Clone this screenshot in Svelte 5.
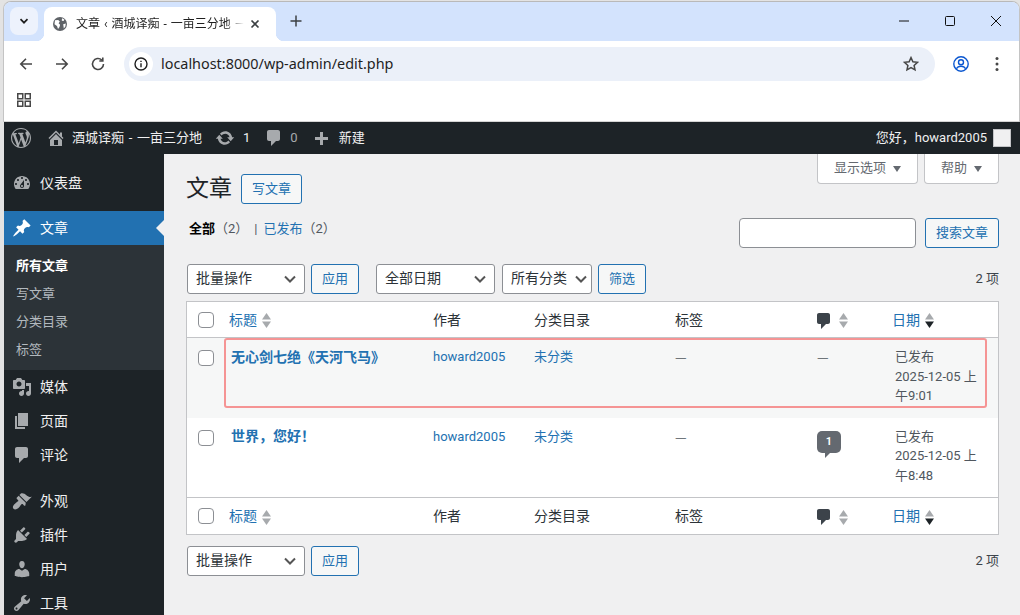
<script>
  const icons = {
    wp: 'M20 10c0-5.51-4.49-10-10-10C4.48 0 0 4.49 0 10c0 5.52 4.48 10 10 10 5.51 0 10-4.48 10-10zM7.78 15.37L4.37 6.22c.55-.02 1.17-.08 1.17-.08.5-.06.44-1.13-.06-1.11 0 0-1.45.11-2.37.11-.18 0-.37 0-.58-.01C4.12 2.69 6.87 1.11 10 1.11c2.33 0 4.45.87 6.05 2.34-.68-.11-1.65.39-1.65 1.58 0 .74.45 1.36.9 2.1.35.61.55 1.36.55 2.46 0 1.49-1.4 5-1.4 5l-3.03-8.37c.54-.02.82-.17.82-.17.5-.05.44-1.25-.06-1.22 0 0-1.44.12-2.38.12-.87 0-2.33-.12-2.33-.12-.5-.03-.56 1.2-.06 1.22l.92.08 1.26 3.41zM17.41 10c.24-.64.74-1.87.43-4.25.7 1.29 1.05 2.71 1.05 4.25 0 3.29-1.73 6.24-4.4 7.78.97-2.59 1.94-5.2 2.92-7.78zM6.1 18.09C3.12 16.65 1.11 13.53 1.11 10c0-1.3.23-2.48.72-3.59C3.25 10.3 4.67 14.2 6.1 18.09zm4.03-6.63l2.58 6.98c-.86.29-1.76.45-2.71.45-.79 0-1.57-.11-2.29-.33.81-2.38 1.62-4.74 2.42-7.1z',
    home: 'M16 8.5l1.53 1.53-1.06 1.06L10 4.62l-6.47 6.47-1.06-1.06L10 2.5l4 4v-2h2v4zm-6-2.46l6 5.99V18H4v-5.97zM12 17v-5H8v5h4z',
    update: 'M10.2 3.28c3.53 0 6.43 2.61 6.92 6h2.08l-3.5 4-3.5-4h2.32c-.45-1.97-2.21-3.45-4.32-3.45-1.45 0-2.73.71-3.54 1.78L4.95 5.66C6.23 4.2 8.11 3.28 10.2 3.28zm-.4 13.44c-3.52 0-6.43-2.61-6.92-6H.8l3.5-4c1.17 1.33 2.33 2.67 3.5 4H5.48c.45 1.97 2.21 3.45 4.32 3.45 1.45 0 2.73-.71 3.54-1.78l1.71 1.95c-1.28 1.46-3.15 2.38-5.25 2.38z',
    plus: 'M17 7v3h-5v5H9v-5H4V7h5V2h3v5h5z',
    dashboard: 'M3.76 16h12.48c1.1-1.37 1.76-3.11 1.76-5 0-4.42-3.58-8-8-8s-8 3.58-8 8c0 1.89.66 3.63 1.76 5zM10 4c.55 0 1 .45 1 1s-.45 1-1 1-1-.45-1-1 .45-1 1-1zM6 6c.55 0 1 .45 1 1s-.45 1-1 1-1-.45-1-1 .45-1 1-1zm8 0c.55 0 1 .45 1 1s-.45 1-1 1-1-.45-1-1 .45-1 1-1zm-5.37 5.55L12 7v6c0 1.1-.9 2-2 2s-2-.9-2-2c0-.57.24-1.08.63-1.45zM4 10c.55 0 1 .45 1 1s-.45 1-1 1-1-.45-1-1 .45-1 1-1zm12 0c.55 0 1 .45 1 1s-.45 1-1 1-1-.45-1-1 .45-1 1-1zm-5 3c0-.55-.45-1-1-1s-1 .45-1 1 .45 1 1 1 1-.45 1-1z',
    post: 'M10.44 3.02l1.82-1.82 6.36 6.35-1.83 1.82c-1.05-.68-2.48-.57-3.41.36l-.75.75c-.92.93-1.04 2.35-.35 3.41l-1.83 1.82-2.41-2.41-2.8 2.79c-.42.42-3.38 2.71-3.8 2.29s1.86-3.39 2.28-3.81l2.79-2.79L4.1 9.36l1.83-1.82c1.05.69 2.48.57 3.4-.36l.75-.75c.93-.92 1.05-2.35.36-3.41z',
    media: 'M13 11V4c0-.55-.45-1-1-1h-1.67L9 1H5L3.67 3H2c-.55 0-1 .45-1 1v7c0 .55.45 1 1 1h10c.55 0 1-.45 1-1zM7 4.5c1.38 0 2.5 1.12 2.5 2.5S8.38 9.5 7 9.5 4.5 8.38 4.5 7 5.62 4.5 7 4.5zM14 6h5v10.5c0 1.38-1.12 2.5-2.5 2.5S14 17.88 14 16.5s1.12-2.5 2.5-2.5c.17 0 .34.02.5.05V9h-3V6zm-4 8.05V13h2v3.5c0 1.38-1.12 2.5-2.5 2.5S7 17.88 7 16.5 8.12 14 9.5 14c.17 0 .34.02.5.05z',
    page: 'M6 15V2h10v13H6zm-1 1h8v2H3V5h2v11z',
    comment: 'M5 2h9c1.1 0 2 .9 2 2v7c0 1.1-.9 2-2 2h-2l-5 5v-5H5c-1.1 0-2-.9-2-2V4c0-1.1.9-2 2-2z',
    appearance: 'M14.48 11.06L7.41 3.99l1.5-1.5c.5-.56 2.3-.47 3.51.32 1.21.8 1.43 1.28 2.91 2.1 1.18.64 2.45 1.26 4.45.85zm-.71.71L6.7 4.7 4.93 6.47c-.39.39-.39 1.02 0 1.41l1.06 1.06c.39.39.39 1.03 0 1.42-.6.6-1.43 1.11-2.21 1.69-.35.26-.7.53-1.01.84C1.43 13.73 0 16.29 1.53 17.82c1.53 1.53 4.09.1 5.42-1.23.31-.31.58-.66.85-1.02.57-.78 1.08-1.61 1.69-2.21.39-.39 1.02-.39 1.41 0l1.06 1.06c.39.39 1.02.39 1.41 0z',
    plugins: 'M13.11 4.36L9.87 7.6 8 5.73l3.24-3.24c.35-.34 1.05-.2 1.56.32.52.51.66 1.21.31 1.55zm-8 1.77l.91-1.12 9.01 9.01-1.19.84c-.71.71-2.63 1.16-3.82 1.16H6.14L4.9 17.26c-.59.59-1.54.59-2.12 0-.59-.58-.59-1.53 0-2.12l1.24-1.24v-3.88c0-1.13.4-3.19 1.09-3.89zm7.26 3.97l3.24-3.24c.34-.35 1.04-.21 1.55.31.52.51.66 1.21.31 1.55l-3.24 3.25z',
    users: 'M10 9.25c-2.27 0-2.73-3.44-2.73-3.44C7 4.02 7.82 2 9.97 2c2.16 0 2.98 2.02 2.71 3.81 0 0-.41 3.44-2.68 3.44zm0 2.57L12.72 10c2.39 0 4.52 2.33 4.52 4.53v2.49s-3.65 1.13-7.24 1.13c-3.65 0-7.24-1.13-7.24-1.13v-2.49c0-2.25 1.94-4.48 4.47-4.48z',
    tools: 'M16.68 9.77c-1.34 1.34-3.3 1.67-4.95.99l-5.41 6.52c-.99.99-2.59.99-3.58 0s-.99-2.59 0-3.57l6.52-5.42c-.68-1.65-.35-3.61.99-4.95 1.28-1.28 3.12-1.62 4.72-1.06l-2.89 2.89 2.82 2.82 2.86-2.87c.53 1.58.18 3.39-1.08 4.65zM3.81 16.21c.4.39 1.04.39 1.43 0 .4-.4.4-1.04 0-1.43-.39-.4-1.03-.4-1.43 0-.39.39-.39 1.03 0 1.43z'
  };

  const menuA = [{ icon: 'media', label: '媒体' }, { icon: 'page', label: '页面' }, { icon: 'comment', label: '评论' }];
  const menuB = [
    { icon: 'appearance', label: '外观' },
    { icon: 'plugins', label: '插件' },
    { icon: 'users', label: '用户' },
    { icon: 'tools', label: '工具' }
  ];
  const submenu = ['所有文章', '写文章', '分类目录', '标签'];

  const posts = [
    { title: '无心剑七绝《天河飞马》', comments: 0, date: '2025-12-05 上午9:01', marked: true },
    { title: '世界，您好！', comments: 1, date: '2025-12-05 上午8:48', marked: false }
  ];
</script>

{#snippet dash(name, size = 20)}
  <svg class="dash" width={size} height={size} viewBox="0 0 20 20" aria-hidden="true"><path d={icons[name]} fill="currentColor" /></svg>
{/snippet}

{#snippet sorter(active = false)}
  <svg class="sorter" width="9" height="15" viewBox="0 0 9 15" aria-hidden="true">
    <path d="M4.5 0 9 6.4H0z" fill="#a7aaad" />
    <path d="M0 8.6h9L4.5 15z" fill={active ? '#1d2327' : '#a7aaad'} />
  </svg>
{/snippet}

{#snippet headerRow()}
  <tr>
    <th class="cb"><span class="check"></span></th>
    <th><a href="#t" class="sort">标题 {@render sorter()}</a></th>
    <th>作者</th>
    <th>分类目录</th>
    <th>标签</th>
    <th class="ccol"><span class="sort"><span class="chead">{@render dash('comment')}</span> {@render sorter()}</span></th>
    <th><a href="#d" class="sort">日期 {@render sorter(true)}</a></th>
  </tr>
{/snippet}

{#snippet bulk()}
  <select class="sel bulk"><option>批量操作</option></select>
  <button class="btn apply">应用</button>
{/snippet}

{#snippet menuItem(icon, label)}
  <span class="ico">{@render dash(icon)}</span><span class="label">{label}</span>
{/snippet}

<div class="window">
  <header class="chrome">
    <div class="tabstrip">
      <span class="tabsearch">
        <svg width="12" height="12" viewBox="0 0 12 12"><path d="M2.5 4.2 6 7.7l3.5-3.5" fill="none" stroke="#1f1f1f" stroke-width="1.7" /></svg>
      </span>
      <div class="tab">
        <svg width="14" height="14" viewBox="0 0 14 14" class="globe"><circle cx="7" cy="7" r="7" fill="#5f6368" /><path d="M2 3.2 5.2 3l1.6 1.6-1.2 1.6 1.5 1.5-.6 2.2-1.5 2L4 9 1.5 7.2zM9 1.2l2.4 1.3-.8 1.6-1.8-.4zM10.2 7.2l2.6-.6-.4 3-1.6 2z" fill="#fff" /></svg>
        <span class="tabtitle">文章 ‹ 酒城译痴 - 一亩三分地 — WordPress</span>
        <svg width="10" height="10" viewBox="0 0 10 10" class="tabx"><path d="M1.5 1.5l7 7m0-7-7 7" stroke="#3c4043" stroke-width="1.7" /></svg>
      </div>
      <svg width="12" height="12" viewBox="0 0 12 12" class="newtab"><path d="M6 .5v11M.5 6h11" stroke="#3c4043" stroke-width="1.5" /></svg>
      <div class="winctl">
        <svg width="12" height="12" viewBox="0 0 12 12"><path d="M1 6h10" stroke="#111" /></svg>
        <svg width="12" height="12" viewBox="0 0 12 12"><rect x="1.5" y="1.5" width="9" height="9" rx="1" fill="none" stroke="#111" /></svg>
        <svg width="12" height="12" viewBox="0 0 12 12"><path d="M1 1l10 10M11 1 1 11" stroke="#111" /></svg>
      </div>
    </div>
    <div class="toolbar">
      <svg width="16" height="16" viewBox="0 0 16 16" class="nav back"><path d="M14 8H3M8 2.8 2.8 8 8 13.2" fill="none" stroke="#474747" stroke-width="1.6" /></svg>
      <svg width="16" height="16" viewBox="0 0 16 16" class="nav fwd"><path d="M2 8h11M8 2.8 13.2 8 8 13.2" fill="none" stroke="#474747" stroke-width="1.6" /></svg>
      <svg width="16" height="16" viewBox="0 0 16 16" class="nav reload"><path d="M13.5 8A5.5 5.5 0 1 1 11.8 4M12.8 1.5V5H9.3" fill="none" stroke="#474747" stroke-width="1.6" /></svg>
      <div class="omnibox">
        <span class="info">
          <svg width="14" height="14" viewBox="0 0 14 14"><circle cx="7" cy="7" r="6" fill="none" stroke="#1f1f1f" stroke-width="1.4" /><path d="M7 6.2v4M7 3.8v1.3" stroke="#1f1f1f" stroke-width="1.4" /></svg>
        </span>
        <span class="url">localhost:8000/wp-admin/edit.php</span>
        <svg width="16" height="16" viewBox="0 0 16 16" class="star"><path d="M8 1.6l1.9 4.2 4.6.5-3.4 3.1.9 4.5L8 11.6l-4 2.3.9-4.5L1.5 6.3l4.6-.5z" fill="none" stroke="#474747" stroke-width="1.5" /></svg>
      </div>
      <svg width="16" height="16" viewBox="0 0 16 16" class="profile"><circle cx="8" cy="8" r="7.2" fill="none" stroke="#0b57d0" stroke-width="1.4" /><circle cx="8" cy="6.2" r="2.5" fill="none" stroke="#0b57d0" stroke-width="1.4" /><path d="M3.4 12.8c1-2 2.8-2.6 4.6-2.6s3.6.6 4.6 2.6" fill="none" stroke="#0b57d0" stroke-width="1.4" /></svg>
      <svg width="4" height="16" viewBox="0 0 4 16" class="kebab"><circle cx="2" cy="2.5" r="1.5" fill="#474747" /><circle cx="2" cy="8" r="1.5" fill="#474747" /><circle cx="2" cy="13.5" r="1.5" fill="#474747" /></svg>
    </div>
    <div class="bookmarks">
      <svg width="14" height="14" viewBox="0 0 14 14"><path d="M.75.75h5v5h-5zM8.25.75h5v5h-5zM.75 8.25h5v5h-5zM8.25 8.25h5v5h-5z" fill="none" stroke="#474747" stroke-width="1.5" /></svg>
    </div>
  </header>

  <div class="wp">
    <nav class="adminbar">
      <span class="ab logo">{@render dash('wp')}</span>
      <span class="ab site">{@render dash('home')}<span class="sitename">酒城译痴 - 一亩三分地</span></span>
      <span class="ab updates">{@render dash('update')}<span class="num">1</span></span>
      <span class="ab comments">{@render dash('comment')}<span class="num dim">0</span></span>
      <span class="ab new"><span class="plus">{@render dash('plus')}</span><span class="newlabel">新建</span></span>
      <span class="ab howdy">您好，howard2005<span class="avatar"></span></span>
    </nav>

    <div class="body">
      <aside class="sidebar">
        <a href="#m" class="item first">{@render menuItem('dashboard', '仪表盘')}</a>
        <a href="#m" class="item current">{@render menuItem('post', '文章')}<i class="notch"></i></a>
        <ul class="sub">
          {#each submenu as s, i}
            <li class:on={i === 0}>{s}</li>
          {/each}
        </ul>
        {#each menuA as m}
          <a href="#m" class="item">{@render menuItem(m.icon, m.label)}</a>
        {/each}
        <div class="gap"></div>
        {#each menuB as m}
          <a href="#m" class="item">{@render menuItem(m.icon, m.label)}</a>
        {/each}
      </aside>

      <main class="main">
        <div class="metatabs">
          <span class="meta">显示选项 <i class="caret"></i></span>
          <span class="meta">帮助 <i class="caret"></i></span>
        </div>

        <div class="heading">
          <h1>文章</h1>
          <button class="btn add">写文章</button>
        </div>

        <div class="filters">
          <ul class="views">
            <li><b>全部</b><span class="count">（2）</span></li>
            <li class="sep">|</li>
            <li><a href="#v">已发布</a><span class="count">（2）</span></li>
          </ul>
          <div class="search">
            <input type="text" class="searchbox" />
            <button class="btn searchbtn">搜索文章</button>
          </div>
        </div>

        <div class="tablenav top">
          {@render bulk()}
          <select class="sel dates"><option>全部日期</option></select>
          <select class="sel cats"><option>所有分类</option></select>
          <button class="btn filter">筛选</button>
          <span class="total">2 项</span>
        </div>

        <table class="posts">
          <colgroup>
            <col style="width:32px" /><col style="width:204px" /><col style="width:101px" /><col style="width:141px" /><col style="width:142px" /><col style="width:75px" /><col />
          </colgroup>
          <thead>{@render headerRow()}</thead>
          <tbody>
            {#each posts as p}
              <tr class:alt={p.marked}>
                <td class="cb"><span class="check"></span></td>
                <td class="title"><a href="#p">{p.title}</a></td>
                <td><a href="#a">howard2005</a></td>
                <td><a href="#c">未分类</a></td>
                <td><span class="nil">—</span></td>
                <td>
                  {#if p.comments}
                    <span class="bubble">{p.comments}</span>
                  {:else}
                    <span class="nil">—</span>
                  {/if}
                </td>
                <td class="date">已发布<br />{p.date}{#if p.marked}<span class="mark"></span>{/if}</td>
              </tr>
            {/each}
          </tbody>
          <tfoot>{@render headerRow()}</tfoot>
        </table>

        <div class="tablenav bottom">
          {@render bulk()}
          <span class="total">2 项</span>
        </div>
      </main>
    </div>
  </div>
</div>

<style>
  :global(body) {
    margin: 0;
    overflow: hidden;
  }

  .window {
    width: 1020px;
    height: 615px;
    box-sizing: border-box;
    overflow: hidden;
    padding: 1px 0 0 3px;
    background: #e3e3e3;
    font-family: Roboto, "Noto Sans CJK SC", sans-serif;
    font-size: 13px;
    line-height: 1.4;
    color: #3c434a;
  }

  .chrome {
    background: #fff;
    border-top: 1px solid #b9b9b9;
    border-left: 1px solid #c4c4c4;
    border-right: 1px solid #c4c4c4;
    border-radius: 8px 8px 0 0;
    overflow: hidden;
  }

  .tabstrip {
    height: 39px;
    background: #d3e3fd;
    display: flex;
    align-items: flex-start;
  }
  .tabsearch {
    width: 28px;
    height: 28px;
    margin: 5px 0 0 6px;
    border-radius: 8px;
    background: #edf2fc;
    display: flex;
    align-items: center;
    justify-content: center;
  }
  .tab {
    width: 232px;
    height: 34px;
    margin: 5px 0 0 6px;
    background: #fff;
    border-radius: 8px 8px 0 0;
    display: flex;
    align-items: center;
    position: relative;
    box-sizing: border-box;
    padding-left: 9px;
    color: #1f1f1f;
  }
  .tab::before,
  .tab::after {
    content: "";
    position: absolute;
    bottom: 0;
    width: 8px;
    height: 8px;
  }
  .tab::before {
    left: -8px;
    background: radial-gradient(circle at 0 0, transparent 8px, #fff 8.5px);
  }
  .tab::after {
    right: -8px;
    background: radial-gradient(circle at 100% 0, transparent 8px, #fff 8.5px);
  }
  .globe {
    flex: none;
  }
  .tabtitle {
    margin-left: 9px;
    width: 168px;
    white-space: nowrap;
    overflow: hidden;
    font-size: 12px;
    word-spacing: 1px;
    -webkit-mask-image: linear-gradient(to right, #000 150px, transparent 168px);
    mask-image: linear-gradient(to right, #000 150px, transparent 168px);
  }
  .tabx {
    margin-left: 6px;
    flex: none;
  }
  .newtab {
    margin: 13px 0 0 14px;
  }
  .winctl {
    margin-left: auto;
    display: flex;
    gap: 34px;
    padding: 13px 17px 0 0;
  }

  .toolbar {
    height: 40px;
    box-sizing: border-box;
    display: flex;
    align-items: center;
    padding: 6px 0 0 14px;
    background: #fff;
  }
  .nav {
    flex: none;
    margin-right: 20px;
  }
  .reload {
    margin-right: 18px;
  }
  .omnibox {
    width: 811px;
    height: 34px;
    border-radius: 17px;
    background: #ebf0f9;
    display: flex;
    align-items: center;
    box-sizing: border-box;
    padding: 0 16px 0 5px;
    flex: none;
  }
  .info {
    width: 24px;
    height: 24px;
    border-radius: 50%;
    background: #fff;
    display: flex;
    align-items: center;
    justify-content: center;
  }
  .url {
    margin-left: 8px;
    font-family: "Noto Sans", sans-serif;
    font-size: 14.4px;
    color: #1f1f1f;
  }
  .star {
    margin-left: auto;
  }
  .profile {
    margin-left: 18px;
    flex: none;
  }
  .kebab {
    margin-left: 26px;
    flex: none;
  }

  .bookmarks {
    height: 41px;
    box-sizing: border-box;
    border-bottom: 1px solid #d4d4d4;
    padding: 12px 0 0 13px;
    background: #fff;
  }
  .bookmarks svg {
    display: block;
  }

  .wp {
    margin-left: 1px;
    background: #f0f0f1;
  }
  .dash {
    display: block;
    flex: none;
  }

  .adminbar {
    height: 32px;
    background: #1d2327;
    color: #f0f0f1;
    display: flex;
    align-items: center;
  }
  .ab {
    display: flex;
    align-items: center;
    color: #f0f0f1;
  }
  .ab .dash {
    color: #a7aaad;
  }
  .logo {
    margin-left: 7px;
  }
  .site {
    margin-left: 15px;
  }
  .sitename {
    margin-left: 6px;
    word-spacing: 1.5px;
  }
  .updates {
    margin-left: 13px;
  }
  .num {
    margin-left: 8px;
  }
  .dim {
    color: #a7aaad;
    margin-left: 6px;
  }
  .comments {
    margin-left: 14px;
  }
  .new {
    margin-left: 13px;
  }
  .plus {
    padding-top: 4px;
  }
  .newlabel {
    margin-left: 8px;
  }
  .howdy {
    margin-left: auto;
    margin-right: 9px;
  }
  .avatar {
    width: 16px;
    height: 16px;
    margin-left: 6px;
    background: #f0f0f1;
    border: 1px solid #c3c4c7;
  }

  .body {
    display: flex;
    align-items: stretch;
    height: 461px;
  }
  .sidebar {
    width: 160px;
    flex: none;
    background: #1d2327;
    padding-top: 12px;
    box-sizing: border-box;
  }
  .item {
    display: flex;
    align-items: center;
    height: 34px;
    color: #f0f0f1;
    font-size: 14px;
    text-decoration: none;
    position: relative;
  }
  .first {
    margin-bottom: 11px;
  }
  .ico {
    width: 36px;
    display: flex;
    justify-content: center;
    color: #a7aaad;
  }
  .label {
    padding-top: 2px;
  }
  .current {
    background: #2271b1;
    color: #fff;
  }
  .current .ico {
    color: #fff;
  }
  .notch {
    position: absolute;
    right: 0;
    top: 9px;
    border: 8px solid transparent;
    border-right-color: #f0f0f1;
    border-left-width: 0;
  }
  .sub {
    list-style: none;
    margin: 0;
    padding: 6.5px 0 5.5px;
    background: #2c3338;
  }
  .sub li {
    height: 28.25px;
    line-height: 28px;
    padding-left: 12px;
    color: rgba(240, 246, 252, 0.7);
  }
  .sub li.on {
    color: #fff;
    font-weight: 600;
  }
  .gap {
    height: 12px;
  }

  .main {
    flex: 1;
    position: relative;
    box-sizing: border-box;
    padding: 0 21px 0 22px;
    min-width: 0;
  }
  .metatabs {
    position: absolute;
    top: 0;
    right: 21px;
    display: flex;
    gap: 6px;
  }
  .meta {
    height: 30px;
    box-sizing: border-box;
    background: #fff;
    border: 1px solid #c3c4c7;
    border-top: 0;
    border-radius: 0 0 4px 4px;
    color: #646970;
    display: flex;
    align-items: center;
    padding: 0 16px;
  }
  .caret {
    border: 4px solid transparent;
    border-top: 6px solid #646970;
    border-bottom: 0;
    margin-left: 7px;
  }

  .heading {
    display: flex;
    align-items: center;
    padding: 20px 0 0 0;
    height: 30px;
  }
  h1 {
    margin: 0;
    font-size: 23px;
    font-weight: 400;
    line-height: 30px;
    color: #1d2327;
  }
  .btn {
    height: 30px;
    box-sizing: border-box;
    border: 1px solid #2271b1;
    border-radius: 3px;
    background: #f6f7f7;
    color: #2271b1;
    font: inherit;
    font-size: 13px;
    padding: 0;
  }
  .add {
    width: 61px;
    margin-left: 9px;
  }

  .filters {
    display: flex;
    justify-content: space-between;
    height: 60px;
    margin-top: 14px;
  }
  .views {
    list-style: none;
    margin: 0;
    padding: 1px 0 0 3px;
    display: flex;
    align-items: flex-start;
    line-height: 20px;
    height: 20px;
  }
  .views b {
    color: #000;
    font-weight: 600;
  }
  .views a {
    color: #2271b1;
    text-decoration: none;
  }
  .count {
    color: #50575e;
  }
  .sep {
    margin: 0 6px 0 6px;
    color: #50575e;
  }
  .search {
    display: flex;
    gap: 9px;
  }
  .searchbox {
    width: 177px;
    height: 30px;
    box-sizing: border-box;
    border: 1px solid #8c8f94;
    border-radius: 4px;
    background: #fff;
    margin: 0;
  }
  .searchbtn {
    width: 74px;
  }

  .tablenav {
    display: flex;
    align-items: center;
    height: 30px;
    padding-left: 1px;
  }
  .tablenav.top {
    margin-top: -14px;
    margin-bottom: 7px;
  }
  .tablenav.bottom {
    margin-top: 11px;
  }
  .sel {
    appearance: none;
    height: 30px;
    box-sizing: border-box;
    border: 1px solid #8c8f94;
    border-radius: 3px;
    padding: 0 24px 0 8px;
    margin: 0;
    font: inherit;
    font-size: 14px;
    color: #2c3338;
    background: #fff url("data:image/svg+xml,%3Csvg xmlns='http://www.w3.org/2000/svg' width='12' height='8' viewBox='0 0 12 8'%3E%3Cpath d='M1 1.5l5 5 5-5' fill='none' stroke='%23555' stroke-width='2'/%3E%3C/svg%3E") no-repeat right 8px center;
  }
  .bulk {
    width: 118px;
  }
  .apply {
    width: 48px;
    margin-left: 6px;
  }
  .dates {
    width: 119px;
    margin-left: 17px;
  }
  .cats {
    width: 90px;
    margin-left: 7px;
    background-position: right 4px center;
  }
  .filter {
    width: 48px;
    margin-left: 6px;
  }
  .total {
    margin-left: auto;
    color: #3c434a;
  }

  .posts {
    width: 813px;
    table-layout: fixed;
    border-collapse: separate;
    border-spacing: 0;
    background: #fff;
    border: 1px solid #c3c4c7;
    box-sizing: border-box;
  }
  th {
    padding: 2px 10px 0;
    box-sizing: border-box;
    text-align: left;
    font-weight: 400;
    font-size: 14px;
    color: #2c3338;
  }
  thead th {
    height: 36px;
    border-bottom: 1px solid #c3c4c7;
  }
  tfoot th {
    height: 37px;
    border-top: 1px solid #c3c4c7;
  }
  th a {
    color: #2271b1;
    text-decoration: none;
  }
  th.cb,
  td.cb {
    padding: 0 0 0 11px;
  }
  .sort {
    display: inline-flex;
    align-items: center;
    gap: 5px;
  }
  .ccol .sort {
    display: flex;
  }
  .chead {
    color: #3c434a;
    margin-left: -3px;
  }
  .sorter {
    display: block;
  }
  .check {
    display: block;
    width: 16px;
    height: 16px;
    box-sizing: border-box;
    border: 1px solid #8c8f94;
    border-radius: 4px;
    background: #fff;
  }
  td {
    vertical-align: top;
    padding: 9px 10px 0;
    line-height: 19.5px;
    height: 79.5px;
    box-sizing: border-box;
    color: #50575e;
  }
  td.cb {
    padding-top: 12px;
  }
  td a {
    color: #2271b1;
    text-decoration: none;
  }
  .nil {
    font-family: "Noto Sans CJK SC", sans-serif;
  }
  .alt td {
    background: #f6f7f7;
  }
  td.title {
    padding-top: 9.5px;
    padding-left: 12px;
    font-size: 14px;
    font-weight: 600;
  }
  .date {
    padding-left: 13px;
    padding-right: 14px;
  }
  tbody tr {
    position: relative;
  }
  .mark {
    position: absolute;
    left: 37px;
    right: 11px;
    top: 0;
    height: 70px;
    box-sizing: border-box;
    border: 2px solid #f59494;
    border-radius: 3px;
    pointer-events: none;
  }
  .bubble {
    display: block;
    position: relative;
    width: 24px;
    height: 22px;
    margin-top: 4px;
    border-radius: 5px;
    background: #646970;
    color: #fff;
    font-size: 11px;
    font-weight: 600;
    line-height: 22px;
    text-align: center;
  }
  .bubble::after {
    content: "";
    position: absolute;
    left: 8px;
    top: 22px;
    border-top: 5px solid #646970;
    border-right: 5px solid transparent;
  }
</style>
